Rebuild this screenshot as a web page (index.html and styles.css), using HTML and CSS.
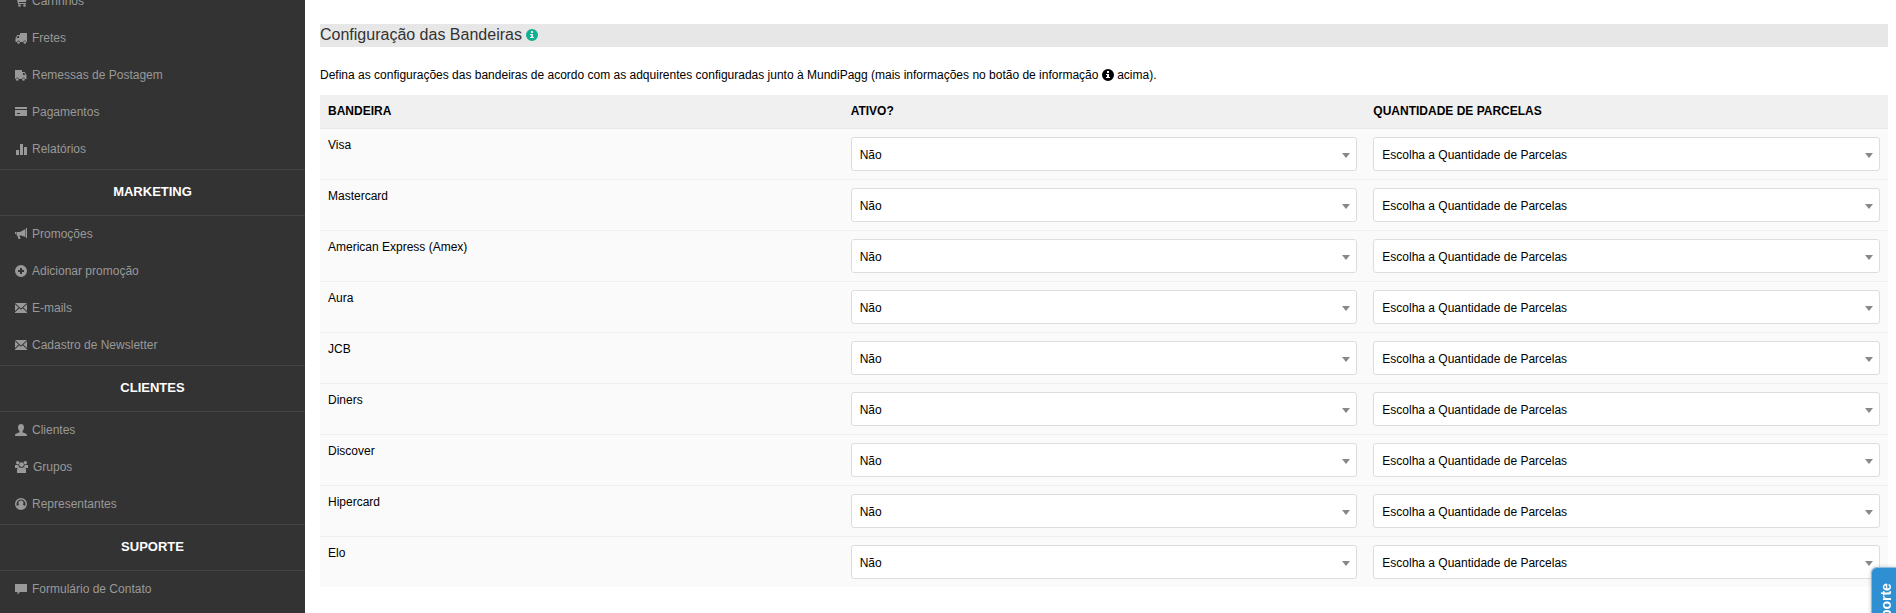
FILE: index.html
```
<!DOCTYPE html>
<html lang="pt-br">

<head>
    <meta charset="UTF-8">
    <meta name="viewport" content="width=device-width, initial-scale=1.0">
    <title>Configuração das Bandeiras</title>

    <link rel="stylesheet" href="styles.css">
</head>

<body>
    <div class="page">
        <nav class="sidebar">
            <ul class="menu">
                <li><a href="#"><svg class="icon" viewBox="0 0 12 12"><path d="M0 1h2l.5 1.500H12L11 7H3.800l.2 1h7v1H3L1.500 2H0z"/><circle cx="4.500" cy="10.500" r="1.300"/><circle cx="9.500" cy="10.500" r="1.300"/></svg>Carrinhos</a></li>
                <li><a href="#"><svg class="icon" viewBox="0 0 12 12"><path fill-rule="evenodd" d="M5 1h7v9h-.6a1.600 1.600 0 0 0-3.200 0H5.100a1.600 1.600 0 0 0-3.200 0H.5V6L2.300 3H5zM1.600 6H4V4H2.800z"/><circle cx="3.500" cy="10.500" r="1.300"/><circle cx="9.800" cy="10.500" r="1.300"/></svg>Fretes</a></li>
                <li><a href="#"><svg class="icon" viewBox="0 0 12 12"><path fill-rule="evenodd" d="M7 1H0v9h.6a1.600 1.600 0 0 1 3.200 0h3.100a1.600 1.600 0 0 1 3.200 0h1.400V6L9.700 3H7zM10.400 6H8V4h1.200z"/><circle cx="2.200" cy="10.500" r="1.300"/><circle cx="8.500" cy="10.500" r="1.300"/></svg>Remessas de Postagem</a></li>
                <li><a href="#"><svg class="icon" viewBox="0 0 12 12"><path fill-rule="evenodd" d="M0 1h12v2H0zM0 4h12v6H0zM2 7v1h3V7z"/></svg>Pagamentos</a></li>
                <li><a href="#"><svg class="icon" viewBox="0 0 12 12"><path d="M1 7h3v5H1zM5 1h3v11H5zM9 4h3v8H9z"/></svg>Relatórios</a></li>
            </ul>

            <h2 class="menu-title">MARKETING</h2>
            <ul class="menu">
                <li><a href="#"><svg class="icon" viewBox="0 0 12 12"><path d="M11 0h1v10h-1zM10.500 1v8L6 7.500H4.500L5.500 11H3.500L2.200 7.200H1.500V4H5zM0 4h1v2H0z"/></svg>Promoções</a></li>
                <li><a href="#"><svg class="icon" viewBox="0 0 12 12"><path fill-rule="evenodd" d="M6 0a6 6 0 1 1 0 12A6 6 0 0 1 6 0zM5 3v2H3v2h2v2h2V7h2V5H7V3z"/></svg>Adicionar promoção</a></li>
                <li><a href="#"><svg class="icon" viewBox="0 0 12 12"><path d="M0 1h12L6 6.500zM0 2.200L3.600 5.500 0 9zM12 2.200V9L8.400 5.500zM4.300 6.200L6 7.800l1.700-1.600L12 10.200V11H0v-.8z"/></svg>E-mails</a></li>
                <li><a href="#"><svg class="icon" viewBox="0 0 12 12"><path d="M0 1h12L6 6.500zM0 2.200L3.600 5.500 0 9zM12 2.200V9L8.400 5.500zM4.300 6.200L6 7.800l1.700-1.600L12 10.200V11H0v-.8z"/></svg>Cadastro de Newsletter</a></li>
            </ul>

            <h2 class="menu-title">CLIENTES</h2>
            <ul class="menu">
                <li><a href="#"><svg class="icon" viewBox="0 0 12 12"><path d="M6 0c2 0 3 1.300 3 3.200C9 5 8.300 6.300 7.500 7v1.200L11 9.700c.7.3 1 .8 1 2.300H0c0-1.500.3-2 1-2.300l3.500-1.500V7C3.700 6.300 3 5 3 3.200 3 1.300 4 0 6 0z"/></svg>Clientes</a></li>
                <li><a href="#"><svg class="icon icon-wide" viewBox="0 0 13 12"><circle cx="2.700" cy="1.800" r="1.700"/><circle cx="10.300" cy="1.800" r="1.700"/><circle cx="6.500" cy="3.600" r="2.400"/><path d="M0 4h3.300l.7 2-1.500 1H0zM13 4H9.700L9 6l1.500 1H13zM2 12V9c0-2 1-2.800 2.500-2.800 1 .8 3 .8 4 0C10 6.200 11 7 11 9v3z"/></svg>Grupos</a></li>
                <li><a href="#"><svg class="icon" viewBox="0 0 12 12"><path fill-rule="evenodd" d="M6 0a6 6 0 1 1 0 12A6 6 0 0 1 6 0zM6 1.500A4.500 4.500 0 0 0 2 8c1-.8 2-.5 2-1.200C3 5 3.500 2.500 6 2.500S9 5 8 6.800c0 .7 1 .4 2 1.200a4.500 4.500 0 0 0-4-6.500z"/></svg>Representantes</a></li>
            </ul>

            <h2 class="menu-title">SUPORTE</h2>
            <ul class="menu">
                <li><a href="#"><svg class="icon" viewBox="0 0 12 12"><path d="M0 1h12v8H5l-2.500 2.500V9H0z"/></svg>Formulário de Contato</a></li>
            </ul>
        </nav>

        <main class="content">
            <h1 class="title">Configuração das Bandeiras
                <svg class="info-icon info-green" viewBox="0 0 12 12"><path fill-rule="evenodd" d="M6 0a6 6 0 1 1 0 12A6 6 0 0 1 6 0zM5 2v2h2V2zM4 5v1h1v2H4v1h4V8H7V5z"/></svg>
            </h1>
            <p class="description">Defina as configurações das bandeiras de acordo com as adquirentes configuradas junto à MundiPagg (mais informações no botão de informação
                <svg class="info-icon" viewBox="0 0 12 12"><path fill-rule="evenodd" d="M6 0a6 6 0 1 1 0 12A6 6 0 0 1 6 0zM5 2v2h2V2zM4 5v1h1v2H4v1h4V8H7V5z"/></svg>
                acima).</p>

            <table class="table">
                <thead>
                    <tr>
                        <th>BANDEIRA</th>
                        <th>ATIVO?</th>
                        <th>QUANTIDADE DE PARCELAS</th>
                    </tr>
                </thead>
                <tbody id="bandeiras"></tbody>
            </table>
        </main>
    </div>

    <button class="support" type="button">Suporte</button>

    <script src="script.js"></script>
</body>

</html>
```
FILE: styles.css
```
* {
    margin: 0;
    padding: 0;
    box-sizing: border-box;
}

body {
    font-family: Arial, "Liberation Sans", sans-serif;
    font-size: 12px;
    line-height: 17px;
    color: #000;
    background: #fff;
}

.page {
    display: flex;
    height: 100vh;
    overflow: hidden;
}

/* menu lateral */
.sidebar {
    flex: 0 0 305px;
    /* menu já rolado */
    margin-top: -17px;
    background: #333;
}

.menu {
    padding-bottom: 1px;
    list-style: none;
}

.menu a {
    display: flex;
    align-items: center;
    gap: 5px;
    height: 37px;
    padding-left: 15px;
    color: #999;
    text-decoration: none;
}

.icon {
    width: 12px;
    height: 12px;
    margin-bottom: 1px;
    fill: currentColor;
}

.icon-wide {
    width: 13px;
}

.menu-title {
    padding: 13px 0 15px;
    border-top: 1px solid #444;
    border-bottom: 1px solid #444;
    color: #fff;
    font-size: 13px;
    text-align: center;
}

/* conteudo */
.content {
    flex: 1;
    padding: 24px 8px 0 15px;
}

.title {
    padding-bottom: 2px;
    background: #e7e7e7;
    color: #333;
    font-size: 16px;
    font-weight: normal;
    line-height: 21px;
}

.info-icon {
    width: 12px;
    height: 12px;
    vertical-align: -2px;
    fill: currentColor;
}

.info-green {
    vertical-align: -1px;
    color: #11b093;
}

.description {
    padding: 20px 0 11px;
}

.table {
    width: 100%;
    table-layout: fixed;
    border-collapse: collapse;
    background: #fafafa;
}

.table th {
    padding: 8px;
    border-bottom: 1px solid #e7e7e7;
    background: #f0f0f0;
    text-align: left;
}

.table td {
    padding: 8px;
    border-bottom: 1px solid #eee;
    vertical-align: top;
}

.table tr:last-child td {
    border-bottom: none;
}

.select {
    position: relative;
}

.select select {
    display: block;
    width: 100%;
    height: 34px;
    padding: 2px 8px 0;
    border: 1px solid #ddd;
    border-radius: 3px;
    background: #fff;
    color: #000;
    font: inherit;
    appearance: none;
}

.select::after {
    content: "";
    position: absolute;
    top: 16px;
    right: 7px;
    border: 4px solid transparent;
    border-top: 5px solid #888;
    border-bottom: none;
    pointer-events: none;
}

/* aba de suporte */
.support {
    position: fixed;
    top: 567px;
    right: 0;
    width: 25px;
    height: 90px;
    padding: 0 5px 15px 0;
    border: 1px solid #8fc0e0;
    border-left: none;
    border-radius: 0 6px 6px 0;
    background: #2e8fd2;
    box-shadow: 0 0 4px rgba(0, 0, 0, .2);
    color: #fff;
    font: bold 14px Arial, "Liberation Sans", sans-serif;
    text-align: right;
    writing-mode: vertical-rl;
    transform: rotate(180deg);
}
```
FILE: script.js
```
const bandeiras = ['Visa', 'Mastercard', 'American Express (Amex)', 'Aura', 'JCB', 'Diners', 'Discover', 'Hipercard', 'Elo']

//monta uma linha da tabela para cada bandeira
const tbody = document.querySelector('#bandeiras')
bandeiras.forEach(function (nome, i) {
    tbody.innerHTML += `
        <tr>
            <td id="nome-${i}">${nome}</td>
            <td><div class="select"><select id="ativo-${i}" aria-labelledby="nome-${i}">
                <option>Não</option>
                <option>Sim</option>
            </select></div></td>
            <td><div class="select"><select id="parcelas-${i}" aria-labelledby="nome-${i}">
                <option>Escolha a Quantidade de Parcelas</option>
            </select></div></td>
        </tr>`
})
```
